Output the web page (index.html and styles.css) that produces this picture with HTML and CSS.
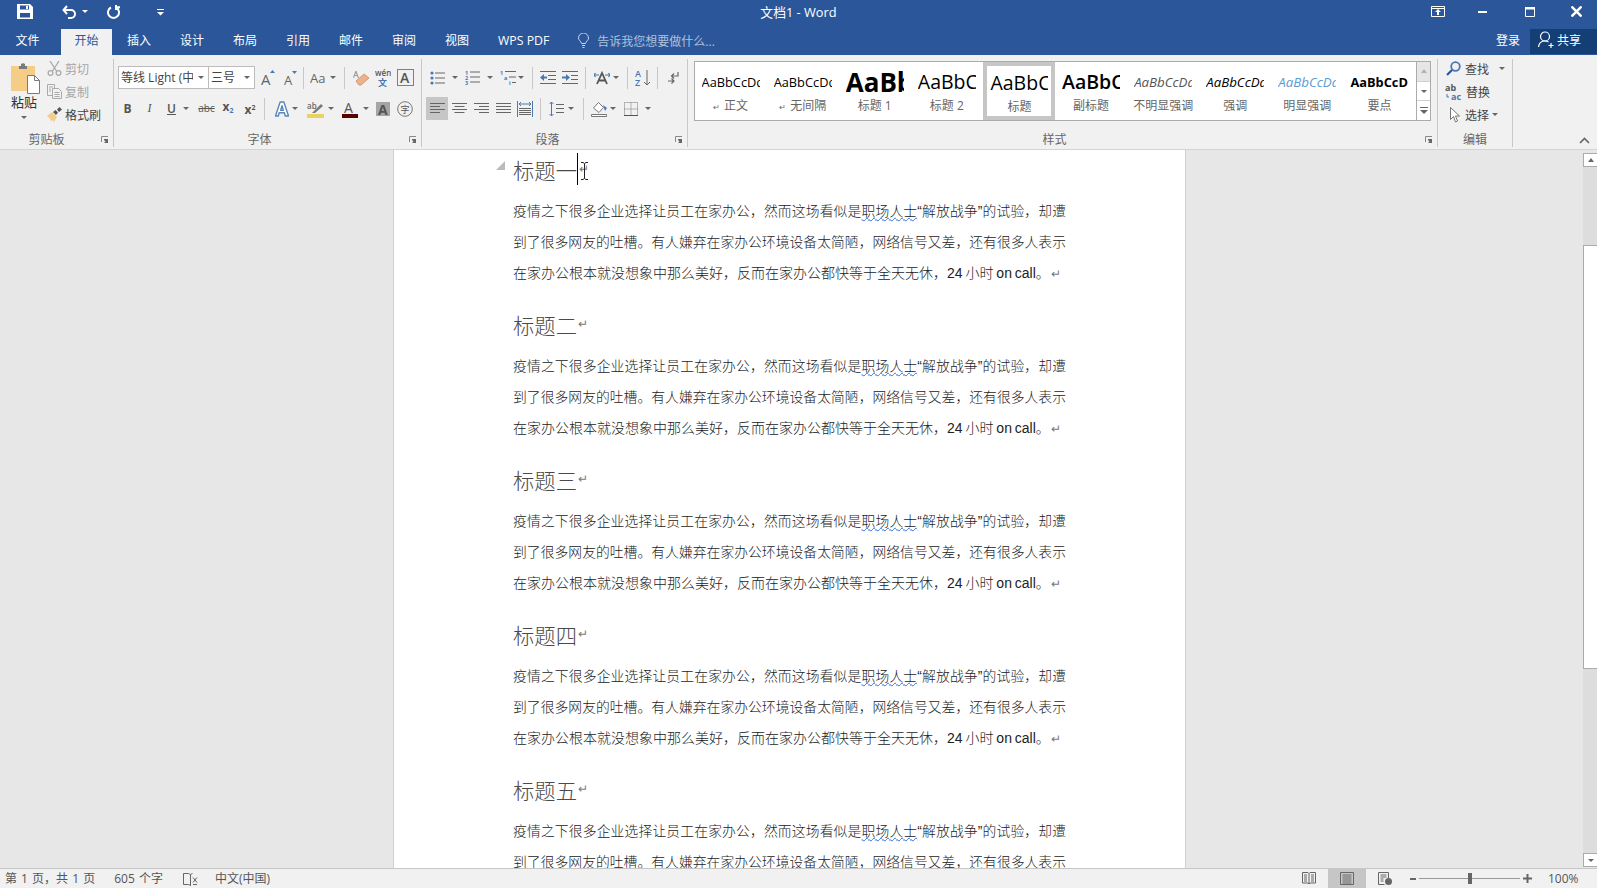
FILE: index.html
```html
<!DOCTYPE html>
<html lang="zh-CN">
<head>
<meta charset="utf-8">
<title>文档1 - Word</title>
<link rel="stylesheet" href="styles.css">
</head>
<body>
<div class="app">
  <header class="titlebar">
    <div class="qat">
      <svg class="q-save" width="16" height="15" viewBox="0 0 16 15"><path fill="#fff" fill-rule="evenodd" d="M0 0h13l3 3v12H0zM3 1.500v4h9v-4zM3 9v4.500h10V9z"/><rect x="9" y="2" width="2" height="3" fill="#fff"/></svg>
      <svg class="q-undo" width="15" height="14" viewBox="0 0 15 14"><path fill="none" stroke="#fff" stroke-width="2" d="M5 1 1.500 5 5 9M2 5h7a4 4 0 0 1 0 8H6"/></svg>
      <i class="caret white q-c1"></i>
      <svg class="q-redo" width="14" height="14" viewBox="0 0 14 14"><path fill="none" stroke="#fff" stroke-width="2" d="M4 2.500a5.500 5.500 0 1 0 5 0M9 0v5M9 2.200h4"/></svg>
      <svg class="q-more" width="9" height="8" viewBox="0 0 9 8"><path fill="#fff" d="M1 1h7v1H1zM1 4h7L4.500 7.500z"/></svg>
    </div>
    <div class="doc-title">文档1 - Word</div>
    <div class="winctl">
      <svg class="w-a" width="14" height="11" viewBox="0 0 14 11"><path fill="none" stroke="#fff" d="M.5.500h13v10H.5zM.5 2.500h13"/><path fill="#fff" d="M7 3l3 3H8v3H6V6H4z"/></svg>
      <svg class="w-b" width="10" height="2" viewBox="0 0 10 2"><path fill="#fff" d="M0 0h9v2H0z"/></svg>
      <svg class="w-c" width="10" height="10" viewBox="0 0 10 10"><path fill="none" stroke="#fff" d="M.5.500h9v9h-9z"/><path fill="#fff" d="M0 0h10v2.500H0z"/></svg>
      <svg class="w-d" width="11" height="11" viewBox="0 0 11 11"><path stroke="#fff" stroke-width="2.500" d="M.5.500l10 10M10.500.500l-10 10"/></svg>
    </div>
  </header>

  <nav class="tabs">
    <span class="tab">文件</span>
    <span class="tab active">开始</span>
    <span class="tab">插入</span>
    <span class="tab">设计</span>
    <span class="tab">布局</span>
    <span class="tab">引用</span>
    <span class="tab">邮件</span>
    <span class="tab">审阅</span>
    <span class="tab">视图</span>
    <span class="tab wps">WPS PDF</span>
    <span class="tell">
      <svg width="11" height="15" viewBox="0 0 11 15"><path fill="none" stroke="#c5d3e6" d="M3.500 10.500C3 8 .5 7.500.5 5a5 5 0 0 1 10 0c0 2.500-2.500 3-3 5.500zM4 12.500h3M4.500 14.500h2"/></svg>
      告诉我您想要做什么...
    </span>
    <span class="login">登录</span>
    <span class="share">
      <svg width="17" height="18" viewBox="0 0 17 18"><circle cx="7" cy="5.500" r="4.500" fill="none" stroke="#fff" stroke-width="1.200"/><path fill="none" stroke="#fff" stroke-width="1.200" d="M.5 16c.5-3.500 3-6 6.500-6 1.500 0 2.500.5 3.500 1M13 12v5M10.500 14.500h5"/></svg>
      共享
    </span>
  </nav>

  <section class="ribbon">
    <div class="group g-clip">
      <div class="clip-body">
        <div class="paste">
          <svg width="29" height="31" viewBox="0 0 29 31"><path fill="#f5cd87" d="M0 3h24v25H0z"/><path fill="#7a7a7a" d="M8 3h2V1q2-1.500 4 0v2h2v3H8z"/><path fill="#fff" stroke="#7a7a7a" d="M16.500 12.500h7l5 5v13h-12z"/><path fill="none" stroke="#7a7a7a" d="M23.500 12.500v5h5"/></svg>
          <span class="paste-t">粘贴</span>
          <i class="caret"></i>
        </div>
        <div class="clip-list">
          <div class="clip-it off"><svg width="15" height="15" viewBox="0 0 15 15"><path fill="none" stroke="#aaa" stroke-width="1.300" d="M3 0l6.500 10M12 0 5.500 10"/><circle cx="3.500" cy="12" r="2.400" fill="none" stroke="#aaa" stroke-width="1.300"/><circle cx="11.500" cy="12" r="2.400" fill="none" stroke="#aaa" stroke-width="1.300"/></svg>剪切</div>
          <div class="clip-it off"><svg width="15" height="15" viewBox="0 0 15 15"><path fill="#f1f1f1" stroke="#aaa" d="M.5.500h7v11h-7z"/><path fill="#f1f1f1" stroke="#aaa" d="M5.500 4.500h6l3 3v7h-9zM7.500 8.500h5M7.500 10.500h5M7.500 12.500h5M2 3h4M2 5h2M2 7h2"/></svg>复制</div>
          <div class="clip-it"><svg width="15" height="15" viewBox="0 0 15 15"><path fill="#f5cd87" d="M0 9l5-4 5 5-3 5-1.500-2L4 14.500 3 11.500z"/><path fill="#555" d="M6 5l2.500-2L11 5.500 9 8zM10 2.500 12.500 0 15 2.500 12 5z"/></svg>格式刷</div>
        </div>
      </div>
      <div class="g-label">剪贴板<svg class="launch" width="8" height="8" viewBox="0 0 8 8"><path fill="none" stroke="#888" d="M.5 6V.5H7"/><path fill="#666" d="M3 3l4 0v4h-4l1.500-1.500L3 4z"/></svg></div>
    </div>

    <div class="group g-font">
      <div class="row">
        <div class="combo c-font"><span class="combo-t">等线 Light (中</span><i class="caret"></i></div>
        <div class="combo c-size"><span class="combo-t">三号</span><i class="caret"></i></div>
        <svg class="ml6" width="15" height="17" viewBox="0 0 15 17"><text x="0" y="16" class="ig a15">A</text><path fill="#4a78b0" d="M9 4l2.500-3L14 4z"/></svg>
        <svg class="ml8" width="14" height="17" viewBox="0 0 14 17"><text x="0" y="16" class="ig a13">A</text><path fill="#4a78b0" d="M8 2h5l-2.500 3z"/></svg>
        <i class="sep ml5"></i>
        <svg class="ml6" width="17" height="15" viewBox="0 0 17 15"><text x="0" y="13" class="ig a14">Aa</text></svg>
        <i class="caret ml3"></i>
        <i class="sep ml8"></i>
        <svg class="ml8" width="17" height="17" viewBox="0 0 17 17"><text x="0" y="9" class="ig a9">A</text><path fill="#eeb28a" stroke="#d29a78" d="M3 12l8-7 5 4-8 7H6z"/></svg>
        <svg class="ml5" width="16" height="18" viewBox="0 0 16 18"><text x="0" y="7" class="ig wen">wén</text><text x="3" y="17" class="ig wenzi">文</text></svg>
        <svg class="ml6" width="17" height="17" viewBox="0 0 17 17"><rect x=".5" y=".5" width="16" height="16" fill="none" stroke="#5b86b8"/><text x="3" y="14" class="ig a14b">A</text></svg>
      </div>
      <div class="row r2">
        <span class="fmt b">B</span>
        <span class="fmt i">I</span>
        <span class="fmt u">U</span>
        <i class="caret ml4"></i>
        <span class="fmt abc">abc</span>
        <span class="fmt sub">x<small>2</small></span>
        <span class="fmt sup">x<small>2</small></span>
        <i class="sep ml7"></i>
        <svg class="ml10" width="14" height="16" viewBox="0 0 15 17"><path fill="#fff" stroke="#5b86b8" stroke-width="1.500" stroke-linejoin="round" d="M5.500 1h4l5 15h-3.500l-1-3.500h-5.500L3.500 16H.5zM7.500 5l-1.500 5h3z"/></svg>
        <i class="caret ml3"></i>
        <svg class="ml9" width="17" height="18" viewBox="0 0 17 18"><text x="0" y="9" class="ig wen2">ab</text><path fill="#7a7a7a" d="M6 12l8-8 2 2-8 7H5z"/><path fill="#ead35c" d="M0 14h17v4H0z"/></svg>
        <i class="caret ml4"></i>
        <svg class="ml8" width="16" height="18" viewBox="0 0 16 18"><text x="2" y="13" class="ig a14r">A</text><path fill="#5b0000" d="M0 14h16v4H0z"/></svg>
        <i class="caret ml5"></i>
        <svg class="ml7" width="14" height="14" viewBox="0 0 14 14"><path fill="#a5a5a5" d="M0 0h14v14H0z"/><text x="2" y="12.500" class="ig a14d">A</text></svg>
        <svg class="ml7" width="16" height="16" viewBox="0 0 16 16"><circle cx="8" cy="8" r="7.300" fill="none" stroke="#777"/><text x="3.500" y="12" class="ig zi">字</text></svg>
      </div>
      <div class="g-label">字体<svg class="launch" width="8" height="8" viewBox="0 0 8 8"><path fill="none" stroke="#888" d="M.5 6V.5H7"/><path fill="#666" d="M3 3l4 0v4h-4l1.500-1.500L3 4z"/></svg></div>
    </div>

    <div class="group g-para">
      <div class="row">
        <svg class="ml8" width="15" height="14" viewBox="0 0 15 14"><g fill="#4a78b0"><circle cx="2" cy="2" r="1.600"/><circle cx="2" cy="7" r="1.600"/><circle cx="2" cy="12" r="1.600"/></g><path stroke="#666" d="M5 2h10M5 7h10M5 12h10"/></svg>
        <i class="caret ml7"></i>
        <svg class="ml7" width="15" height="15" viewBox="0 0 15 15"><text x="0" y="5" class="ig n5">1</text><text x="0" y="10" class="ig n5">2</text><text x="0" y="15" class="ig n5">3</text><path stroke="#666" d="M5 2h10M5 7h10M5 12h10"/></svg>
        <i class="caret ml7"></i>
        <svg class="ml7" width="16" height="15" viewBox="0 0 16 15"><text x="0" y="5" class="ig n5">1</text><text x="4" y="10" class="ig n5">a</text><text x="9" y="15" class="ig n5">i</text><path stroke="#666" d="M5 1.500h11M9 7h7M12 12.500h4"/></svg>
        <i class="caret ml2"></i>
        <i class="sep ml8"></i>
        <svg class="ml7" width="16" height="13" viewBox="0 0 16 13"><path stroke="#666" d="M0 .5h16M8 4.500h8M8 8.500h8M0 12.500h16"/><path fill="#4a78b0" d="M0 6.500 4 3v2.500h3v2H4V10z"/></svg>
        <svg class="ml6" width="16" height="13" viewBox="0 0 16 13"><path stroke="#666" d="M0 .5h16M9 4.500h7M9 8.500h7M0 12.500h16"/><path fill="#4a78b0" d="M8 6.500 4 3v2.500H0v2h4V10z"/></svg>
        <i class="sep ml7"></i>
        <svg class="ml8" width="16" height="14" viewBox="0 0 16 14"><path fill="none" stroke="#555" stroke-width="1.800" d="M3 13 8 2l5 11M5 9.500h6"/><path fill="none" stroke="#4a78b0" stroke-width="1.200" d="M0 4h5M1.500 2 0 4l1.500 2M16 4h-5M14.500 2 16 4l-1.500 2"/></svg>
        <i class="caret ml3"></i>
        <i class="sep ml8"></i>
        <svg class="ml7" width="16" height="16" viewBox="0 0 16 16"><text x="0" y="7" class="ig az">A</text><text x="0" y="15.500" class="ig az">Z</text><path fill="none" stroke="#666" d="M12 0v15M9 12l3 3 3-3"/></svg>
        <i class="sep ml6"></i>
        <svg class="ml10" width="11" height="12" viewBox="0 0 11 12"><path fill="none" stroke="#666" stroke-width="1.200" d="M10 0v4H4M6 1.500 3.500 4 6 6.500M0 9h6M3.500 6.500 6 9l-2.500 2.500"/></svg>
      </div>
      <div class="row r2">
        <span class="al on"><svg width="15" height="11" viewBox="0 0 15 11"><path stroke="#666" d="M0 .5h15M0 3.500h10M0 6.500h15M0 9.500h10"/></svg></span>
        <span class="al"><svg width="15" height="11" viewBox="0 0 15 11"><path stroke="#666" d="M0 .5h15M2.500 3.500h10M0 6.500h15M2.500 9.500h10"/></svg></span>
        <span class="al"><svg width="15" height="11" viewBox="0 0 15 11"><path stroke="#666" d="M0 .5h15M5 3.500h10M0 6.500h15M5 9.500h10"/></svg></span>
        <span class="al"><svg width="15" height="11" viewBox="0 0 15 11"><path stroke="#666" d="M0 .5h15M0 3.500h15M0 6.500h15M0 9.500h15"/></svg></span>
        <svg class="ml1" width="16" height="16" viewBox="0 0 16 16"><path stroke="#4a78b0" d="M.5 0v16M15.500 0v16M2 3h12M2 3l2-2M2 3l2 2M14 3l-2-2M14 3l-2 2"/><path stroke="#666" d="M2 7.500h12M2 9.500h12M2 11.500h12M2 13.500h12"/></svg>
        <i class="sep ml7"></i>
        <svg class="ml8" width="15" height="16" viewBox="0 0 15 16"><path stroke="#4a78b0" fill="none" d="M2.500 1v14M.5 3l2-2 2 2M.5 13l2 2 2-2"/><path stroke="#666" d="M7 3.500h8M7 7.500h8M7 11.500h8"/></svg>
        <i class="caret ml4"></i>
        <i class="sep ml9"></i>
        <svg class="ml7" width="17" height="16" viewBox="0 0 17 16"><path fill="#fff" stroke="#777" d="M.5 13.500h15v2H.5zM2.500 7 7.500 1.500l5 5-4.500 5z"/><path fill="#4a78b0" d="M12 4l4 3-2 3z"/></svg>
        <i class="caret ml2"></i>
        <svg class="ml8" width="14" height="14" viewBox="0 0 14 14"><path fill="none" stroke="#777" stroke-dasharray="1 1" d="M.5.500h13v13H.5zM7 .5v13M.5 7h13"/><path stroke="#555" d="M0 13.500h14"/></svg>
        <i class="caret ml7"></i>
      </div>
      <div class="g-label">段落<svg class="launch" width="8" height="8" viewBox="0 0 8 8"><path fill="none" stroke="#888" d="M.5 6V.5H7"/><path fill="#666" d="M3 3l4 0v4h-4l1.500-1.500L3 4z"/></svg></div>
    </div>

    <div class="group g-style">
      <div class="gallery">
        <div class="styles">
          <div class="sty"><span class="pv n">AaBbCcDdEe</span><span class="lb"><em>↵</em>正文</span></div>
          <div class="sty"><span class="pv n">AaBbCcDdEe</span><span class="lb"><em>↵</em>无间隔</span></div>
          <div class="sty"><span class="pv h1">AaBbC</span><span class="lb">标题 1</span></div>
          <div class="sty"><span class="pv h2">AaBbCcD</span><span class="lb">标题 2</span></div>
          <div class="sty sel"><span class="pv h2">AaBbCcD</span><span class="lb">标题</span></div>
          <div class="sty"><span class="pv h3">AaBbCcD</span><span class="lb">副标题</span></div>
          <div class="sty"><span class="pv em1">AaBbCcDdEe</span><span class="lb">不明显强调</span></div>
          <div class="sty"><span class="pv em2">AaBbCcDdEe</span><span class="lb">强调</span></div>
          <div class="sty"><span class="pv em3">AaBbCcDdEe</span><span class="lb">明显强调</span></div>
          <div class="sty"><span class="pv st">AaBbCcDdEe</span><span class="lb">要点</span></div>
        </div>
        <div class="gal-btns">
          <span class="gb off"><i class="up"></i></span>
          <span class="gb"><i class="caret"></i></span>
          <span class="gb"><svg width="8" height="7" viewBox="0 0 8 7"><path fill="#666" d="M0 0h8v1H0zM0 3h8L4 7z"/></svg></span>
        </div>
      </div>
      <div class="g-label">样式<svg class="launch" width="8" height="8" viewBox="0 0 8 8"><path fill="none" stroke="#888" d="M.5 6V.5H7"/><path fill="#666" d="M3 3l4 0v4h-4l1.500-1.500L3 4z"/></svg></div>
    </div>

    <div class="group g-edit">
      <div class="edit-list">
        <div class="ed"><svg class="e1" width="15" height="15" viewBox="0 0 15 15"><circle cx="9.500" cy="5.500" r="4.300" fill="none" stroke="#4a78b0" stroke-width="1.800"/><path stroke="#2b579a" stroke-width="2.200" d="M6 9 1 14"/></svg><span>查找</span><i class="caret ml10"></i></div>
        <div class="ed"><svg class="e2" width="17" height="16" viewBox="0 0 17 16"><text x="0" y="7" class="ig ab">ab</text><text x="6" y="15.500" class="ig ac">ac</text><path fill="none" stroke="#4a78b0" d="M2 10v3h2"/></svg><span>替换</span></div>
        <div class="ed"><svg class="e3" width="10" height="16" viewBox="0 0 10 16"><path fill="#fff" stroke="#777" d="M.5.500v12l3-3 2 5.500 2-1-2-5h4z"/></svg><span class="t3">选择</span><i class="caret ml3"></i></div>
      </div>
      <div class="g-label">编辑</div>
    </div>
    <svg class="collapse" width="11" height="7" viewBox="0 0 11 7"><path fill="none" stroke="#666" stroke-width="1.600" d="M1 6l4.500-4.500L10 6"/></svg>
  </section>

  <main class="workspace">
    <article class="page">
      <section class="sect">
        <h1 class="hd">
          <svg class="mark" width="9" height="9" viewBox="0 0 9 9"><path fill="#bbb" d="M9 0v9H0z"/></svg>
          <span>标题一</span><i class="ibar"></i><em class="ret">↵</em>
          <svg class="ibeam" width="9" height="18" viewBox="0 0 9 18"><path fill="none" stroke="#222" d="M1 .5h2l1.500 1 1.500-1h2M4.500 1.500v15M1 17.500h2l1.500-1 1.500 1h2"/></svg>
        </h1>
        <p class="ln just">疫情之下很多企业选择让员工在家办公，然而这场看似是<span class="wavy">职场人士</span>“解放战争”的试验，却遭</p>
        <p class="ln just">到了很多网友的吐槽。有人嫌弃在家办公环境设备太简陋，网络信号又差，还有很多人表示</p>
        <p class="ln last">在家办公根本就没想象中那么美好，反而在家办公都快等于全天无休，24 小时 on call。<em class="ret">↵</em></p>
      </section>
      <section class="sect">
        <h1 class="hd"><span>标题二</span><em class="ret">↵</em></h1>
        <p class="ln just">疫情之下很多企业选择让员工在家办公，然而这场看似是<span class="wavy">职场人士</span>“解放战争”的试验，却遭</p>
        <p class="ln just">到了很多网友的吐槽。有人嫌弃在家办公环境设备太简陋，网络信号又差，还有很多人表示</p>
        <p class="ln last">在家办公根本就没想象中那么美好，反而在家办公都快等于全天无休，24 小时 on call。<em class="ret">↵</em></p>
      </section>
      <section class="sect">
        <h1 class="hd"><span>标题三</span><em class="ret">↵</em></h1>
        <p class="ln just">疫情之下很多企业选择让员工在家办公，然而这场看似是<span class="wavy">职场人士</span>“解放战争”的试验，却遭</p>
        <p class="ln just">到了很多网友的吐槽。有人嫌弃在家办公环境设备太简陋，网络信号又差，还有很多人表示</p>
        <p class="ln last">在家办公根本就没想象中那么美好，反而在家办公都快等于全天无休，24 小时 on call。<em class="ret">↵</em></p>
      </section>
      <section class="sect">
        <h1 class="hd"><span>标题四</span><em class="ret">↵</em></h1>
        <p class="ln just">疫情之下很多企业选择让员工在家办公，然而这场看似是<span class="wavy">职场人士</span>“解放战争”的试验，却遭</p>
        <p class="ln just">到了很多网友的吐槽。有人嫌弃在家办公环境设备太简陋，网络信号又差，还有很多人表示</p>
        <p class="ln last">在家办公根本就没想象中那么美好，反而在家办公都快等于全天无休，24 小时 on call。<em class="ret">↵</em></p>
      </section>
      <section class="sect">
        <h1 class="hd"><span>标题五</span><em class="ret">↵</em></h1>
        <p class="ln just">疫情之下很多企业选择让员工在家办公，然而这场看似是<span class="wavy">职场人士</span>“解放战争”的试验，却遭</p>
        <p class="ln just">到了很多网友的吐槽。有人嫌弃在家办公环境设备太简陋，网络信号又差，还有很多人表示</p>
      </section>
    </article>
    <aside class="vscroll">
      <span class="sbtn"><i class="up"></i></span>
      <div class="track"><div class="thumb"></div></div>
      <span class="sbtn"><i class="caret"></i></span>
    </aside>
  </main>

  <footer class="status">
    <span class="s1">第 1 页，共 1 页</span>
    <span class="s2">605 个字</span>
    <svg class="s3" width="15" height="14" viewBox="0 0 15 14"><path fill="none" stroke="#666" d="M.5 1.500h5l2 1v11l-2-1h-5zM7.500 2.500l2-1M7.500 6v7.500M10 5.500l4 5M14 5.500l-4 5M10 12.500h4"/></svg>
    <span class="s4">中文(中国)</span>
    <div class="s-right">
      <span class="view"><svg width="14" height="13" viewBox="0 0 14 13"><path fill="none" stroke="#666" d="M.5.500h5.500l1 1 1-1h5.500v10.500h-5.500l-1 1-1-1H.5zM7 1.500V12M2 3h3M2 5h3M2 7h3M2 9h3M9 3h3M9 5h3M9 7h3M9 9h3"/></svg></span>
      <span class="view on"><svg width="14" height="13" viewBox="0 0 14 13"><path fill="none" stroke="#666" d="M.5.500h13v12H.5zM2.500 3h9M2.500 5h9M2.500 7h9M2.500 9h9M2.500 11h9"/></svg></span>
      <span class="view"><svg width="14" height="13" viewBox="0 0 14 13"><path fill="none" stroke="#666" d="M.5.500h10v6M.5.500v12h6M2.500 3h6M2.500 5h6M2.500 7h3M2.500 9h3"/><circle cx="10.500" cy="9.500" r="3.500" fill="#666"/></svg></span>
      <div class="zoom">
        <i class="zminus"></i>
        <div class="zline"><i class="zthumb"></i></div>
        <svg width="9" height="9" viewBox="0 0 9 9"><path fill="#666" d="M3.500 0h2v3.500H9v2H5.500V9h-2V5.500H0v-2h3.500z"/></svg>
      </div>
      <span class="pct">100%</span>
    </div>
  </footer>
</div>
</body>
</html>
```
FILE: styles.css
```css
* { box-sizing: border-box; }
html, body { margin: 0; height: 100%; }
body {
  font-family: "Open Sans", "Noto Sans CJK SC", sans-serif;
  font-size: 12px;
  color: #444;
  overflow: hidden;
}
em { font-style: normal; }
i { display: block; }
svg { display: block; flex: none; }
.app { width: 1597px; height: 888px; display: flex; flex-direction: column; background: #e6e7e6; overflow: hidden; }

/* title bar */
.titlebar { height: 29px; flex: none; background: #2b579a; color: #fff; display: grid; grid-template-columns: 1fr auto 1fr; align-items: center; }
.qat { display: flex; align-items: center; padding-left: 17px; padding-bottom: 6px; }
.q-undo { margin-left: 29px; }
.q-c1 { margin-left: 5px; }
.q-redo { margin-left: 19px; }
.q-more { margin-left: 35px; }
.caret { width: 0; height: 0; border: 3px solid transparent; border-top: 3.5px solid #666; border-bottom: 0; flex: none; }
.caret.white { border-top-color: #fff; }
.doc-title { font-size: 12.800px; padding-bottom: 6px; }
.winctl { display: flex; align-items: center; justify-content: flex-end; padding-right: 15px; padding-bottom: 6px; }
.w-a { margin-right: 33px; }
.w-b { margin-right: 37px; }
.w-c { margin-right: 36px; }

/* tabs */
.tabs { height: 26px; flex: none; background: #2b579a; color: #fff; display: flex; align-items: stretch; padding-left: 1px; }
.tab { width: 53px; flex: none; text-align: center; line-height: 23px; font-size: 12px; }
.tab:first-child { margin-right: 7px; }
.tab.active { background: #f1f1f1; color: #2b579a; width: 51px; margin-right: .5px; }
.tab.wps { width: auto; margin-left: 14.500px; font-size: 12.300px; }
.tell { display: flex; align-items: center; gap: 8px; margin-left: 29px; color: #adc1dd; height: 23px; }
.login { margin-left: auto; margin-right: 10px; line-height: 23px; }
.share { width: 67px; height: 25px; background: #133f76; display: flex; align-items: center; gap: 2px; padding: 0 0 3px 8px; }

/* ribbon */
.ribbon { height: 95px; flex: none; background: #f1f1f1; border-bottom: 1px solid #d4d4d4; display: flex; align-items: flex-start; position: relative; }
.group { height: 88px; margin-top: 4px; border-right: 1px solid #c8c8c8; display: flex; flex-direction: column; flex: none; }
.g-clip { width: 114px; }
.g-font { width: 308px; padding-left: 4px; }
.g-para { width: 266px; }
.g-style { width: 750px; }
.g-edit { width: 75px; }
.g-label { margin-top: auto; height: 14px; line-height: 14px; text-align: center; font-size: 12px; color: #666; position: relative; }
.g-clip .g-label { padding-right: 20px; }
.g-font .g-label { padding-right: 20px; }
.g-para .g-label { padding-right: 14px; }
.g-style .g-label { padding-right: 16px; }
.launch { position: absolute; right: 4px; top: 3px; }
.row { display: flex; align-items: center; height: 23px; margin-top: 7px; }
.row.r2 { margin-top: 8px; }

.ml1 { margin-left: 3px; } .ml2 { margin-left: 2px; } .ml3 { margin-left: 3px; } .ml4 { margin-left: 4px; }
.ml5 { margin-left: 5px; } .ml6 { margin-left: 6px; } .ml7 { margin-left: 7px; } .ml8 { margin-left: 8px; }
.ml9 { margin-left: 9px; } .ml10 { margin-left: 10px; }
.sep { width: 1px; height: 22px; background: #c8c8c8; flex: none; }

/* clipboard */
.clip-body { display: flex; flex: 1; min-height: 0; }
.paste { width: 46px; padding: 4px 0 0 11px; display: flex; flex-direction: column; align-items: flex-start; }
.paste-t { font-size: 13px; color: #333; line-height: 16px; margin-top: 0; }
.paste .caret { margin: 6px 0 0 10px; }
.clip-list { margin-top: -2px; }
.clip-it { display: flex; align-items: center; gap: 3px; height: 23px; color: #444; margin-left: 1px; }
.clip-it.off { color: #a6a6a6; }

/* font */
.combo { height: 23px; background: #fff; border: 1px solid #bcbcbc; display: flex; align-items: center; justify-content: space-between; padding: 0 4px 0 2px; flex: none; }
.c-font { width: 91px; }
.c-size { width: 47px; margin-left: -1px; }
.combo-t { color: #444; font-size: 12px; white-space: nowrap; overflow: hidden; width: 72px; margin-top: -1px; }
.c-size .combo-t { width: 30px; }
.ig { font-family: "Open Sans", "Noto Sans CJK SC", sans-serif; fill: #666; }
.a15 { font-size: 15px; } .a13 { font-size: 13px; } .a14 { font-size: 13px; } .a9 { font-size: 9px; fill: #777; }
.a14b { font-size: 14px; font-weight: 600; fill: #555; }
.a14r { font-size: 14px; fill: #555; } .a14d { font-size: 14px; font-weight: 700; fill: #555; }
.wen { font-size: 8px; font-weight: 600; fill: #555; } .wenzi { font-size: 9px; fill: #4a78b0; font-weight: 700; }
.wen2 { font-size: 8px; fill: #666; font-weight: 600; }
.zi { font-size: 9px; fill: #555; }
.n5 { font-size: 5.500px; fill: #4a78b0; font-weight: 700; }
.az { font-size: 9px; fill: #4a78b0; font-weight: 600; }
.ab { font-size: 9px; fill: #555; font-weight: 700; } .ac { font-size: 9px; fill: #4a78b0; font-weight: 700; }
.fmt { font-family: "Open Sans", sans-serif; color: #555; flex: none; text-align: center; line-height: 23px; }
.fmt small { font-size: 7px; color: #4a78b0; }
.b { width: 15px; margin-left: 2px; font-weight: 700; font-size: 12px; }
.i { width: 15px; margin-left: 7px; font-style: italic; font-size: 12px; font-family: "Liberation Serif", serif; }
.u { width: 15px; margin-left: 7px; text-decoration: underline; font-weight: 600; font-size: 12px; }
.abc { width: 17px; margin-left: 9px; font-size: 10px; text-decoration: line-through; }
.sub { width: 14px; margin-left: 6px; font-weight: 700; }
.sub small { vertical-align: -2px; }
.sup { width: 14px; margin-left: 8px; font-weight: 700; }
.sup small { vertical-align: 4px; color: #555; }

/* paragraph */
.al { width: 22px; height: 23px; display: flex; align-items: center; justify-content: center; flex: none; }
.al.on { background: #c6c6c6; margin-left: 4px; }

/* styles */
.gallery { height: 60px; margin: 2px 0 0 6px; width: 737px; display: flex; border: 1px solid #ababab; background: #fff; }
.styles { display: grid; grid-template-columns: repeat(10, 1fr); width: 721px; flex: none; }
.sty { display: flex; flex-direction: column; align-items: center; overflow: hidden; padding: 3px 1px 0 0; }
.sty.sel { border: 4px solid #c6c6c6; padding: 0; }
.pv { width: 58px; height: 34px; line-height: 34px; overflow: hidden; white-space: nowrap; font-family: "Open Sans", sans-serif; color: #000; flex: none; }
.pv.n { font-size: 12.800px; }
.pv.h1 { font-size: 26px; font-weight: 700; }
.pv.h2 { font-size: 19.500px; }
.pv.h3 { font-size: 19.500px; font-weight: 600; }
.pv.em1 { font-size: 13.300px; font-style: italic; color: #555; }
.pv.em2 { font-size: 13.300px; font-style: italic; }
.pv.em3 { font-size: 13.300px; font-style: italic; color: #5b9bd5; }
.pv.st { font-size: 12.800px; font-weight: 700; }
.lb { color: #666; font-size: 12px; line-height: 16px; white-space: nowrap; margin-top: -1px; }
.lb em { font-size: 8px; margin-right: 4px; color: #666; }
.gal-btns { flex: 1; display: flex; flex-direction: column; border-left: 1px solid #ababab; }
.gb { flex: 1; display: flex; align-items: center; justify-content: center; border-bottom: 1px solid #d0d0d0; }
.gb:last-child { border-bottom: 0; }
.gb.off { background: #e6e6e6; }
.up { width: 0; height: 0; border: 3.500px solid transparent; border-bottom: 4px solid #b0b0b0; border-top: 0; }

/* editing */
.edit-list { margin-top: -2px; padding-left: 6px; }
.ed { display: flex; align-items: center; height: 23px; color: #444; }
.ed span { margin-left: 4px; }
.ed .t3 { margin-left: 5px; }
.e1 { margin-left: 2px; }
.e2 { margin-left: 1px; }
.e3 { margin-left: 6px; }
.collapse { position: absolute; right: 7px; top: 82px; }

/* workspace */
.workspace { flex: 1; min-height: 0; display: flex; justify-content: space-between; padding-left: 393px; overflow: hidden; }
.page { width: 793px; background: #fff; border: 1px solid #d0d0d0; border-width: 0 1px; padding: 1px 118px 0 119px; overflow: hidden; font-family: "Liberation Sans", "Noto Sans CJK SC", sans-serif; }
.sect { height: 155px; }
.hd { margin: 0 0 5px; height: 40px; padding-bottom: 4px; font-size: 21.330px; font-weight: 300; color: #4a4a4a; position: relative; display: flex; align-items: center; font-family: "Noto Sans CJK SC", sans-serif; }
.mark { position: absolute; left: -17px; top: 10px; }
.ibar { width: 1px; height: 32px; background: #000; }
.ibeam { position: absolute; left: 67px; top: 11px; }
.ret { color: #777; font-size: 12px; font-family: "DejaVu Sans", sans-serif; margin-left: 1px; }
.ln { margin: 0; height: 31px; line-height: 31px; width: 553px; font-size: 13.800px; font-weight: 300; color: #222; white-space: nowrap; }
.ln.just { text-align: justify; text-align-last: justify; white-space: normal; }
.ln.last { font-size: 14px; word-spacing: -1px; }
.wavy { text-decoration: underline wavy #2f6fd6 1px; }

.vscroll { width: 14px; margin-top: 3px; display: flex; flex-direction: column; flex: none; padding-bottom: 1px; }
.sbtn { height: 14px; background: #fff; border: 1px solid #ababab; border-right: 0; display: flex; align-items: center; justify-content: center; flex: none; }
.sbtn .up { border-bottom-color: #666; }
.track { flex: 1; background: #dcdddc; padding-top: 78px; }
.thumb { height: 424px; background: #fff; border: 1px solid #ababab; border-right: 0; }

/* status */
.status { height: 20px; flex: none; background: #f1f1f1; border-top: 1px solid #c6c6c6; display: flex; align-items: center; padding-left: 5px; color: #555; font-size: 12px; }
.s1, .s2, .s4 { margin-top: -2px; word-spacing: 1px; }
.s2 { margin-left: 19px; }
.s3 { margin-left: 20px; }
.s4 { margin-left: 17px; }
.s-right { margin-left: auto; display: flex; align-items: center; height: 19px; }
.view { width: 38px; height: 19px; display: flex; align-items: center; justify-content: center; }
.view.on { background: #c6c6c6; }
.zoom { display: flex; align-items: center; margin-left: 6px; }
.zminus { width: 6px; height: 2px; background: #666; }
.zline { width: 101px; height: 1px; background: #999; margin: 0 3px; position: relative; }
.zthumb { position: absolute; left: 49px; top: -5px; width: 4px; height: 11px; background: #666; }
.pct { width: 39px; margin-left: 16px; margin-right: 10px; font-size: 12px; }
```
